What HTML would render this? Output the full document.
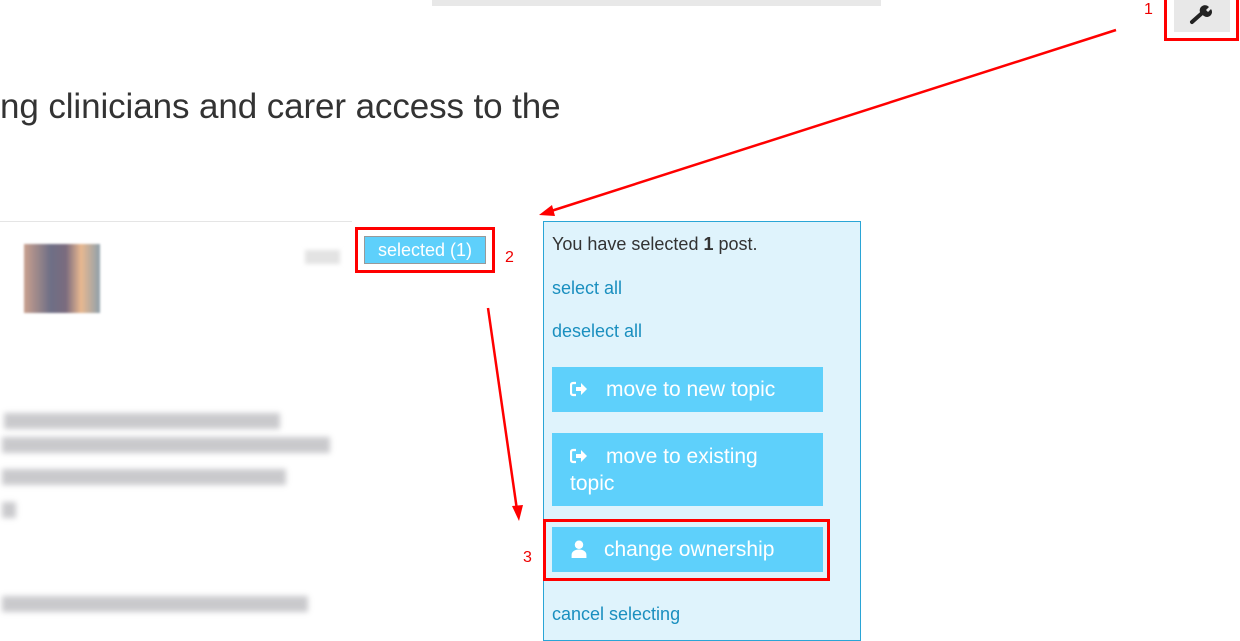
<!DOCTYPE html>
<html><head><style>
body{margin:0;width:1240px;height:620px;overflow:hidden;background:#fff;font-family:"Liberation Sans",sans-serif;position:relative}
.a{position:absolute}
.btn{position:absolute;left:552px;width:271px;background:#5ed0fb;color:#fff;font-size:21px;box-sizing:border-box;padding-left:18px}
.lnk{position:absolute;left:552px;color:#1a8fbf;font-size:18px}
.blur{position:absolute;height:16px;background:#b8b8bc;filter:blur(3px);opacity:.75}
.ic{display:inline-block;width:18px;margin-right:18px;vertical-align:-1px}
</style></head><body>
<div class="a" style="left:432px;top:0;width:449px;height:6px;background:#e8e8e8"></div>
<div class="a" style="left:0;top:87px;font-size:35px;color:#333;white-space:nowrap;letter-spacing:-0.1px">ng clinicians and carer access to the</div>

<div class="a" style="left:0;top:221px;width:352px;height:1px;background:#e5e5e5"></div>
<div class="a" style="left:24px;top:244px;width:76px;height:69px;background:linear-gradient(90deg,#c9a08e,#6e6f86 35%,#7a6b7e 55%,#e8b890 75%,#8fa0ab);filter:blur(1px)"></div>
<div class="a" style="left:305px;top:250px;width:35px;height:14px;background:#e3e3e3;filter:blur(2px)"></div>
<div class="blur" style="left:4px;top:413px;width:276px"></div>
<div class="blur" style="left:2px;top:437px;width:328px"></div>
<div class="blur" style="left:2px;top:469px;width:284px"></div>
<div class="blur" style="left:2px;top:502px;width:14px"></div>
<div class="blur" style="left:2px;top:596px;width:306px"></div>

<div class="a" style="left:355px;top:227px;width:134px;height:40px;border:3px solid #f00"></div>
<div class="a" style="left:364px;top:236px;width:122px;height:28px;background:#5ed0fb;border:1px solid #999;box-sizing:border-box;color:#fff;font-size:18px;text-align:center;line-height:26px">selected (1)</div>
<div class="a" style="left:505px;top:249px;color:#e00;font-size:16px">2</div>

<div class="a" style="left:543px;top:221px;width:318px;height:420px;background:#dff3fc;border:1px solid #2aa5d6;box-sizing:border-box"></div>
<div class="a" style="left:552px;top:234px;font-size:18px;color:#333">You have selected <b>1</b> post.</div>
<div class="lnk" style="top:278px">select all</div>
<div class="lnk" style="top:321px">deselect all</div>
<div class="btn" style="top:367px;height:45px;line-height:45px"><svg class="ic" width="18" height="16" viewBox="0 0 18 16"><path d="M6 2H3a2 2 0 0 0-2 2v8a2 2 0 0 0 2 2h3" stroke="#fff" stroke-width="2.2" fill="none"/><path d="M6 6h5V2l6 6-6 6v-4H6z" fill="#fff"/></svg>move to new topic</div>
<div class="btn" style="top:433px;height:73px;line-height:27px;padding-top:10px"><svg class="ic" width="18" height="16" viewBox="0 0 18 16"><path d="M6 2H3a2 2 0 0 0-2 2v8a2 2 0 0 0 2 2h3" stroke="#fff" stroke-width="2.2" fill="none"/><path d="M6 6h5V2l6 6-6 6v-4H6z" fill="#fff"/></svg>move to existing<br>topic</div>
<div class="btn" style="top:527px;height:45px;line-height:45px"><svg width="18" height="18" viewBox="0 0 16 17" style="margin-right:16px;vertical-align:-2px"><circle cx="8" cy="4.5" r="4" fill="#fff"/><path d="M1 17v-3c0-3 3-5 7-5s7 2 7 5v3z" fill="#fff"/></svg>change ownership</div>
<div class="a" style="left:543px;top:519px;width:281px;height:56px;border:3px solid #f00"></div>
<div class="a" style="left:523px;top:549px;color:#e00;font-size:16px">3</div>
<div class="lnk" style="top:604px">cancel selecting</div>

<div class="a" style="left:1174px;top:0;width:56px;height:32px;background:#e8e8e8"></div>
<div class="a" style="left:1164px;top:-3px;width:69px;height:38px;border:3px solid #f00"></div>
<svg class="a" style="left:1189px;top:5px" width="24" height="20" viewBox="0 0 24 20"><path d="M3 17l9-8" stroke="#222" stroke-width="4" stroke-linecap="round"/><path d="M12 9a5 5 0 0 1 8-7l-3 3 2 2 3-3a5 5 0 0 1-7 7z" fill="#222"/></svg>
<div class="a" style="left:1144px;top:1px;color:#e00;font-size:16px">1</div>

<svg class="a" style="left:0;top:0" width="1240" height="620">
<line x1="1116" y1="30" x2="548" y2="212" stroke="#f00" stroke-width="2.5"/>
<polygon points="539,215 552,205 555,216" fill="#f00"/>
<line x1="488" y1="308" x2="517" y2="510" stroke="#f00" stroke-width="2.5"/>
<polygon points="519,521 512,506 523,505" fill="#f00"/>
</svg>
</body></html>
